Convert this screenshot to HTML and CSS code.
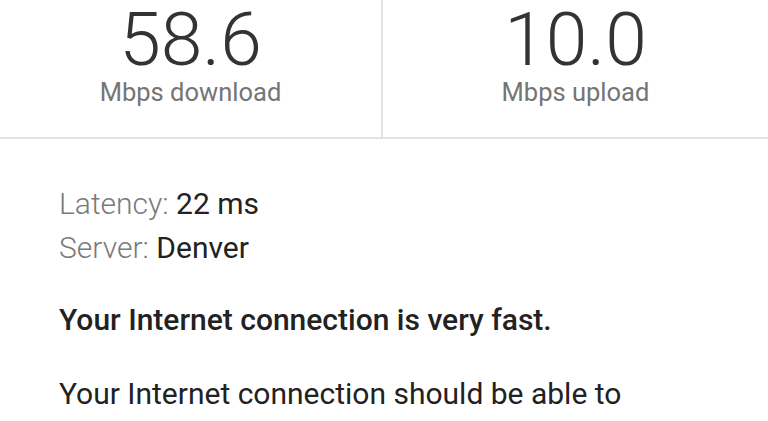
FILE: index.html
```html
<!DOCTYPE html>
<html lang="en">
<head>
<meta charset="utf-8">
<title>Speed test result</title>
<link rel="stylesheet" href="styles.css">
</head>
<body>
<div class="stats">
  <div class="stat stat-left">
    <div class="value">58.6</div>
    <div class="label">Mbps download</div>
  </div>
  <div class="stat">
    <div class="value">10.0</div>
    <div class="label">Mbps upload</div>
  </div>
</div>
<div class="info">
  <div class="row"><span class="key">Latency:</span> <span class="val">22 ms</span></div>
  <div class="row"><span class="key">Server:</span> <span class="val">Denver</span></div>
  <p class="summary">Your Internet connection is very fast.</p>
  <p class="detail">Your Internet connection should be able to</p>
</div>
</body>
</html>
```

FILE: styles.css
```css
html, body {
  margin: 0;
  padding: 0;
  background: #ffffff;
  font-family: Roboto, "Liberation Sans", sans-serif;
  overflow: hidden;
}

.stats {
  display: grid;
  grid-template-columns: 383px 1fr;
  border-bottom: 2px solid #e2e2e2;
}

.stat {
  text-align: center;
  padding: 2px 0 30px;
}

.stat-left {
  border-right: 2px solid #e2e2e2;
}

.value {
  font-size: 75px;
  line-height: 75px;
  font-weight: 300;
  color: #333333;
}

.label {
  font-size: 25.5px;
  line-height: 30px;
  font-weight: 400;
  color: #757575;
}

.info {
  padding: 43px 0 0 59px;
  font-size: 30px;
  line-height: 44px;
}

.key {
  font-weight: 300;
  color: #7a7a7a;
}

.val {
  font-weight: 400;
  color: #222222;
}

.summary {
  margin: 28px 0 0;
  font-weight: 500;
  color: #222222;
}

.detail {
  margin: 30px 0 0;
  font-weight: 400;
  color: #222222;
}
```
